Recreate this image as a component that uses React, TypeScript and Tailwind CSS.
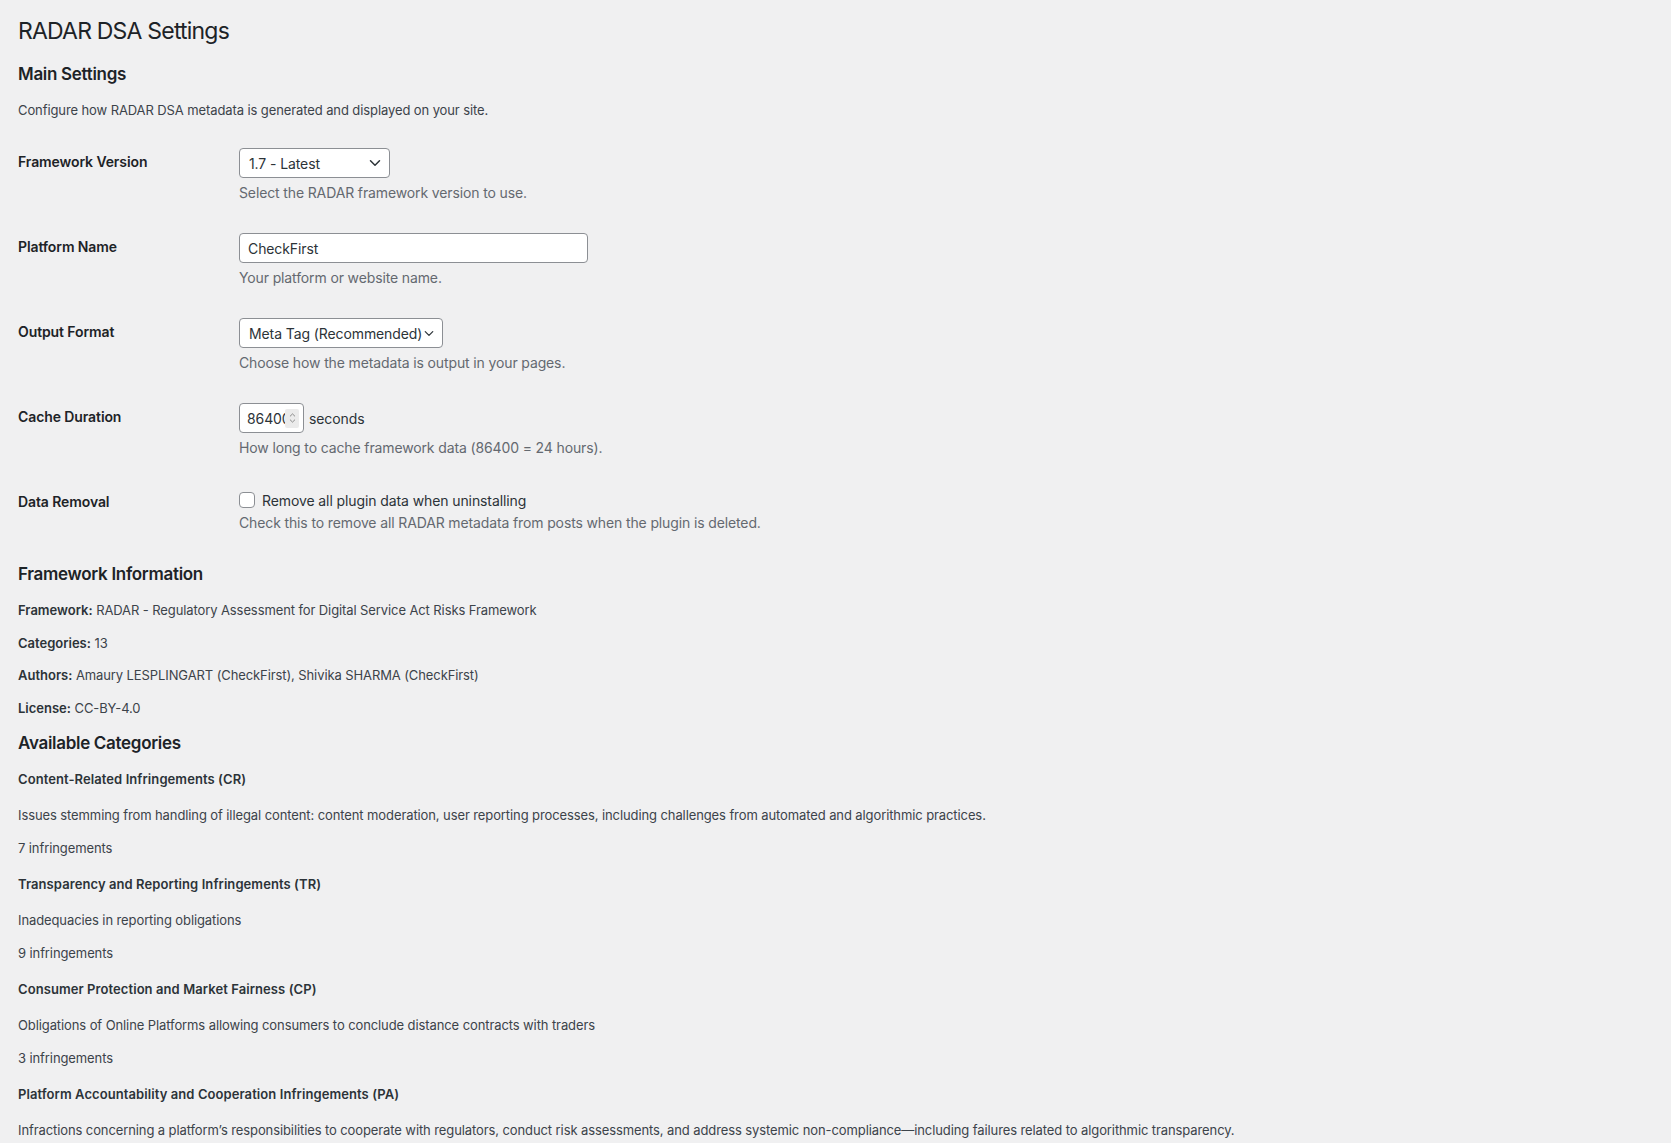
import React from "react";

const categories = [
  {
    title: "Content-Related Infringements (CR)",
    desc: "Issues stemming from handling of illegal content: content moderation, user reporting processes, including challenges from automated and algorithmic practices.",
    count: 7,
  },
  {
    title: "Transparency and Reporting Infringements (TR)",
    desc: "Inadequacies in reporting obligations",
    count: 9,
  },
  {
    title: "Consumer Protection and Market Fairness (CP)",
    desc: "Obligations of Online Platforms allowing consumers to conclude distance contracts with traders",
    count: 3,
  },
  {
    title: "Platform Accountability and Cooperation Infringements (PA)",
    desc: "Infractions concerning a platform’s responsibilities to cooperate with regulators, conduct risk assessments, and address systemic non-compliance—including failures related to algorithmic transparency.",
    count: 5,
  },
];

function Chevron({ className = "" }: { className?: string }) {
  return (
    <svg viewBox="0 0 12 8" className={className} fill="none" stroke="currentColor" strokeWidth="1.5" strokeLinecap="round" strokeLinejoin="round">
      <path d="M1.5 1.8 6 6.2l4.5-4.4" />
    </svg>
  );
}

function Row({ label, children }: { label: string; children: React.ReactNode }) {
  return (
    <div className="flex">
      <div className="w-[221px] shrink-0 pt-[20px] text-[14px] leading-[18px] font-semibold tracking-[-0.1px] text-[#1d2327]">{label}</div>
      <div className="pt-[15px] pb-[15px]">{children}</div>
    </div>
  );
}

function Desc({ children }: { children: React.ReactNode }) {
  return <p className="mt-[4px] text-[14px] leading-[21px] tracking-[-0.13px] text-[#646970]">{children}</p>;
}

export default function App() {
  return (
    <div className="min-h-screen bg-[#f0f0f1] pl-[18px] pt-[16px] text-[#3c434a] tracking-[-0.1px] font-['Inter',sans-serif] overflow-hidden">
      <h1 className="text-[23px] leading-[30px] font-normal tracking-[-0.8px] text-[#1d2327]">RADAR DSA Settings</h1>

      <h2 className="mt-[17px] text-[17px] leading-[22px] font-semibold tracking-[-0.3px] text-[#1d2327]">Main Settings</h2>
      <p className="mt-[15px] text-[13px] leading-[20px]">Configure how RADAR DSA metadata is generated and displayed on your site.</p>

      <div className="mt-[13px]">
        <Row label="Framework Version">
          <div className="flex h-[30px] w-[151px] items-center justify-between rounded-[4px] border border-[#8c8f94] bg-white pl-[9px] pr-[8px] text-[14px] text-[#2c3338]">
            <span>1.7 - Latest</span>
            <Chevron className="w-[12px] h-[8px] text-[#2c3338]" />
          </div>
          <Desc>Select the RADAR framework version to use.</Desc>
        </Row>

        <Row label="Platform Name">
          <div className="flex h-[30px] w-[349px] items-center rounded-[4px] border border-[#8c8f94] bg-white px-[8px] text-[14px] text-[#2c3338]">
            CheckFirst
          </div>
          <Desc>Your platform or website name.</Desc>
        </Row>

        <Row label="Output Format">
          <div className="flex h-[30px] w-[204px] items-center justify-between rounded-[4px] border border-[#8c8f94] bg-white pl-[9px] pr-[8px] text-[14px] text-[#2c3338]">
            <span>Meta Tag (Recommended)</span>
            <Chevron className="w-[10px] h-[7px] text-[#2c3338]" />
          </div>
          <Desc>Choose how the metadata is output in your pages.</Desc>
        </Row>

        <Row label="Cache Duration">
          <div className="flex items-center gap-[5px]">
            <div className="flex h-[30px] w-[65px] items-center rounded-[4px] border border-[#8c8f94] bg-white pl-[7px] pr-[3px] text-[14px] text-[#2c3338]">
              <span className="w-[38px] overflow-hidden whitespace-nowrap">86400</span>
              <span className="flex h-[19px] w-[14px] flex-col items-center justify-center gap-[2px] rounded-[2px] bg-[#ebebeb] text-[#6b6b6b]">
                <Chevron className="w-[7px] h-[4px] rotate-180" />
                <Chevron className="w-[7px] h-[4px]" />
              </span>
            </div>
            <span className="text-[14px] text-[#2c3338]">seconds</span>
          </div>
          <Desc>How long to cache framework data (86400 = 24 hours).</Desc>
        </Row>

        <Row label="Data Removal">
          <div className="flex h-[24px] items-center gap-[7px] text-[14px] text-[#2c3338]">
            <span className="h-[16px] w-[16px] rounded-[4px] border border-[#8c8f94] bg-white" />
            <span>Remove all plugin data when uninstalling</span>
          </div>
          <p className="text-[14px] leading-[21px] tracking-[-0.13px] text-[#646970]">Check this to remove all RADAR metadata from posts when the plugin is deleted.</p>
        </Row>
      </div>

      <h2 className="mt-[15px] text-[17px] leading-[22px] font-semibold tracking-[-0.3px] text-[#1d2327]">Framework Information</h2>
      <div className="mt-[16px] flex flex-col gap-[13px] text-[13px] leading-[19.5px]">
        <p><strong className="font-semibold tracking-[0px] text-[#2c3338]">Framework:</strong> RADAR - Regulatory Assessment for Digital Service Act Risks Framework</p>
        <p><strong className="font-semibold tracking-[0px] text-[#2c3338]">Categories:</strong> 13</p>
        <p><strong className="font-semibold tracking-[0px] text-[#2c3338]">Authors:</strong> Amaury LESPLINGART (CheckFirst), Shivika SHARMA (CheckFirst)</p>
        <p><strong className="font-semibold tracking-[0px] text-[#2c3338]">License:</strong> CC-BY-4.0</p>
      </div>

      <h2 className="mt-[14px] text-[17px] leading-[22px] font-semibold tracking-[-0.3px] text-[#1d2327]">Available Categories</h2>
      <div className="mt-[16px] flex flex-col gap-[16.5px] text-[13px] leading-[19.5px]">
        {categories.map((c) => (
          <div key={c.title} className="flex flex-col">
            <h4 className="font-semibold tracking-[0.08px] text-[#2c3338]">{c.title}</h4>
            <p className="mt-[16.5px]">{c.desc}</p>
            <p className="mt-[13.5px]">{c.count} infringements</p>
          </div>
        ))}
      </div>
    </div>
  );
}
